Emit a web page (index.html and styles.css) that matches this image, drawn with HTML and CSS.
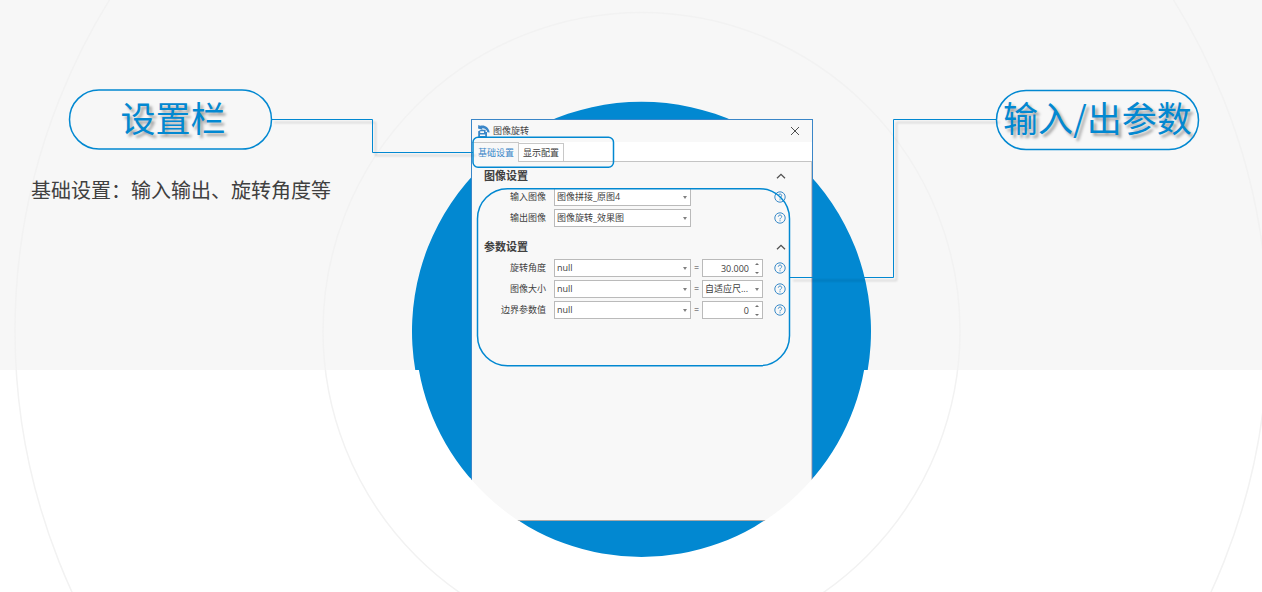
FILE: index.html
```html
<!DOCTYPE html>
<html lang="zh-CN">
<head>
<meta charset="utf-8">
<title>图像旋转</title>
<link rel="stylesheet" href="styles.css">
</head>
<body>
<main class="stage">
  <svg class="canvas" width="1262" height="592" viewBox="0 0 1262 592" aria-hidden="true">
    <path class="disc" d="M415.300 370H418.900A226 226 0 0 0 864.100 370H867.700A229.500 229.500 0 1 0 415.300 370Z"/>
    <g class="rings">
      <circle cx="641.500" cy="331" r="318.500"/>
      <circle cx="641.500" cy="331" r="626.500"/>
    </g>
  </svg>

  <section class="callout callout-left">
    <h2 class="pill">设置栏</h2>
    <p class="note">基础设置：输入输出、旋转角度等</p>
  </section>

  <section class="dialog" aria-label="图像旋转">
    <header class="titlebar">
      <svg class="app-icon" width="13" height="13" viewBox="0 0 13 13" aria-hidden="true">
        <path d="M1.300 0 3.200 0.800C7.500 -0.200 12 2 12.600 7.600L10.400 7.300C9.700 4.600 8 3.200 5 3.300L5.600 4.700 1 3.600Z"/>
        <path fill-rule="evenodd" d="M1.200 6.200 4 4.800H8.600V7H10V12.700H1.200ZM3.200 6.300V7.900H7V6.300ZM3 9.600V11H8.200V9.600Z"/>
      </svg>
      <span class="title">图像旋转</span>
      <button class="close" type="button" aria-label="关闭">
        <svg width="10" height="10" viewBox="0 0 10 10"><path d="M1 1 9 9M9 1 1 9"/></svg>
      </button>
    </header>
    <div class="tabs" role="tablist">
      <button class="tab tab-active" type="button" role="tab" aria-selected="true">基础设置</button>
      <button class="tab" type="button" role="tab" aria-selected="false">显示配置</button>
    </div>
    <form class="body">
      <div class="group">
        <div class="group-head">
          <h3>图像设置</h3>
          <button class="fold" type="button" aria-label="折叠图像设置"><svg width="10" height="6" viewBox="0 0 10 6"><path d="M1 5.300 5 1.300 9 5.300"/></svg></button>
        </div>
        <div class="row">
          <label for="src">输入图像</label>
          <span class="field"><select id="src"><option>图像拼接_原图4</option></select><i class="down"></i></span>
          <button class="help" type="button" aria-label="帮助"><svg width="12" height="12" viewBox="0 0 12 12"><circle cx="6" cy="6" r="5.200"/><path d="M4.300 4.700C4.300 2.500 7.700 2.500 7.700 4.600 7.700 5.900 6 5.900 6 7.400M6 8.300V9.300"/></svg></button>
        </div>
        <div class="row">
          <label for="dst">输出图像</label>
          <span class="field"><select id="dst"><option>图像旋转_效果图</option></select><i class="down"></i></span>
          <button class="help" type="button" aria-label="帮助"><svg width="12" height="12" viewBox="0 0 12 12"><circle cx="6" cy="6" r="5.200"/><path d="M4.300 4.700C4.300 2.500 7.700 2.500 7.700 4.600 7.700 5.900 6 5.900 6 7.400M6 8.300V9.300"/></svg></button>
        </div>
      </div>
      <div class="group">
        <div class="group-head">
          <h3>参数设置</h3>
          <button class="fold" type="button" aria-label="折叠参数设置"><svg width="10" height="6" viewBox="0 0 10 6"><path d="M1 5.300 5 1.300 9 5.300"/></svg></button>
        </div>
        <div class="row">
          <label for="angle">旋转角度</label>
          <span class="field"><select id="angle"><option>null</option></select><i class="down"></i></span>
          <span class="equals">=</span>
          <span class="field"><input class="number" type="text" value="30.000" aria-label="旋转角度值"><i class="spin-up"></i><i class="spin-down"></i></span>
          <button class="help" type="button" aria-label="帮助"><svg width="12" height="12" viewBox="0 0 12 12"><circle cx="6" cy="6" r="5.200"/><path d="M4.300 4.700C4.300 2.500 7.700 2.500 7.700 4.600 7.700 5.900 6 5.900 6 7.400M6 8.300V9.300"/></svg></button>
        </div>
        <div class="row">
          <label for="size">图像大小</label>
          <span class="field"><select id="size"><option>null</option></select><i class="down"></i></span>
          <span class="equals">=</span>
          <span class="field"><select aria-label="图像大小值"><option>自适应尺...</option></select><i class="down"></i></span>
          <button class="help" type="button" aria-label="帮助"><svg width="12" height="12" viewBox="0 0 12 12"><circle cx="6" cy="6" r="5.200"/><path d="M4.300 4.700C4.300 2.500 7.700 2.500 7.700 4.600 7.700 5.900 6 5.900 6 7.400M6 8.300V9.300"/></svg></button>
        </div>
        <div class="row">
          <label for="edge">边界参数值</label>
          <span class="field"><select id="edge"><option>null</option></select><i class="down"></i></span>
          <span class="equals">=</span>
          <span class="field"><input class="number" type="text" value="0" aria-label="边界参数"><i class="spin-up"></i><i class="spin-down"></i></span>
          <button class="help" type="button" aria-label="帮助"><svg width="12" height="12" viewBox="0 0 12 12"><circle cx="6" cy="6" r="5.200"/><path d="M4.300 4.700C4.300 2.500 7.700 2.500 7.700 4.600 7.700 5.900 6 5.900 6 7.400M6 8.300V9.300"/></svg></button>
        </div>
      </div>
    </form>
  </section>

  <section class="callout callout-right">
    <h2 class="pill">输入/出参数</h2>
  </section>

  <svg class="canvas" width="1262" height="592" viewBox="0 0 1262 592" aria-hidden="true">
    <path class="corner" d="M470 478A226 226 0 0 0 520 521.700H470Z"/>
    <path class="corner" d="M813 478A226 226 0 0 1 763 521.700H813Z"/>
    <g class="links">
      <path d="M271 119.500H372.500V152.500H473"/>
      <path d="M997 119.500H893.500V277.500H790"/>
    </g>
    <g class="outlines">
      <rect x="69.500" y="90" width="202" height="59" rx="29.500"/>
      <rect x="996.500" y="90.500" width="202" height="59" rx="29.500"/>
      <rect x="473" y="137.300" width="140.500" height="30" rx="5"/>
      <rect x="477.500" y="188.700" width="312" height="177" rx="30"/>
    </g>
  </svg>
</main>
</body>
</html>
```
FILE: styles.css
```css
* {
  box-sizing: border-box;
}

body {
  margin: 0;
  font-family: "Open Sans", "Noto Sans CJK SC", sans-serif;
  color: #404040;
}

h2,
h3,
p {
  margin: 0;
  font-weight: 400;
}

button {
  padding: 0;
  border: 0;
  background: none;
  font: inherit;
  color: inherit;
}

.stage {
  position: relative;
  display: grid;
  grid-template-columns: 1fr 342px 1fr;
  align-items: start;
  min-height: 100vh;
  padding-left: 22px;
  overflow: hidden;
  background: linear-gradient(#f7f7f7 370px, #ffffff 370px);
}

.canvas {
  position: absolute;
  top: 0;
  left: calc(50% - 631px);
  pointer-events: none;
}

.disc {
  fill: #0288d1;
}

.rings {
  fill: none;
  stroke: #f2f2f2;
  stroke-width: 1.5;
}

.corner {
  fill: #ffffff;
}

.links {
  fill: none;
  stroke: #0288d1;
  filter: drop-shadow(3px 3px 1px rgba(0, 0, 0, 0.2));
}

.outlines {
  fill: none;
  stroke: #0288d1;
  stroke-width: 1.5;
}

.callout {
  position: relative;
  display: flex;
  flex-direction: column;
  gap: 28px;
  padding-top: 88px;
}

.callout-left {
  align-items: flex-end;
  padding-right: 140px;
}

.callout-right {
  padding-left: 184px;
}

.pill {
  width: 202px;
  padding-left: 6px;
  font-family: "Noto Sans CJK SC", sans-serif;
  font-size: 35px;
  line-height: 58px;
  color: #0288d1;
  white-space: nowrap;
  text-shadow: 3px 3px 3px rgba(0, 0, 0, 0.35);
}

.callout-left .pill {
  margin-right: 60px;
  text-align: center;
}

.note {
  font-family: "Noto Sans CJK SC", sans-serif;
  font-size: 20px;
  line-height: 32px;
  white-space: nowrap;
}

.dialog {
  position: relative;
  display: flex;
  flex-direction: column;
  min-height: 402px;
  margin-top: 119px;
  border: 1px solid #3a86c8;
  border-bottom-color: #a8a8a8;
  background: #f8f8f8;
  font-size: 9px;
  line-height: 12px;
}

.titlebar {
  display: flex;
  align-items: center;
  gap: 3px;
  height: 22px;
  padding: 0 12px 0 5px;
}

.app-icon {
  fill: #3a86c8;
}

.title {
  flex: 1;
}

.close,
.fold,
.help {
  display: flex;
}

.close svg,
.fold svg {
  fill: none;
  stroke: #505050;
}

.fold svg {
  stroke-width: 1.3;
}

.tabs {
  display: flex;
  align-items: flex-end;
  height: 20px;
  background: #ffffff;
  border-bottom: 1px solid #c4c4c4;
}

.tab {
  height: 18px;
  padding: 0 4px;
  border: 1px solid #c8c8c8;
  border-width: 1px 1px 0 0;
}

.tab-active {
  height: 20px;
  margin-bottom: -1px;
  padding: 0 4px 0 6px;
  background: #f8f8f8;
  color: #3a86c8;
}

.body {
  display: flex;
  flex: 1;
  flex-direction: column;
  gap: 10px;
  padding: 4px 25px 0 12px;
  border-right: 1px solid #c8c8c8;
}

.group {
  display: flex;
  flex-direction: column;
  gap: 3px;
}

.group-head {
  display: flex;
  align-items: center;
  justify-content: space-between;
  height: 19px;
}

.group-head h3 {
  font-size: 11px;
  font-weight: 700;
  line-height: 16px;
}

.row {
  display: grid;
  grid-template-columns: 70px 137px 11px 61px 1fr;
  align-items: center;
  height: 18px;
}

.row label {
  padding-right: 8px;
  text-align: right;
}

.field {
  position: relative;
  display: flex;
  height: 18px;
}

.field select,
.field input {
  width: 100%;
  height: 18px;
  margin: 0;
  padding: 0 14px 0 2px;
  border: 1px solid #bababa;
  border-radius: 0;
  outline: 0;
  appearance: none;
  background: #ffffff;
  font: inherit;
  color: inherit;
}

.field .number {
  padding-right: 13px;
  text-align: right;
}

.down,
.spin-up,
.spin-down {
  position: absolute;
  right: 4px;
  border: 2px solid transparent;
}

.down {
  top: 8px;
  border-top: 3px solid #808080;
  border-bottom: 0;
}

.spin-up {
  top: 4px;
  border-top: 0;
  border-bottom: 2px solid #707070;
}

.spin-down {
  bottom: 3px;
  border-top: 2px solid #707070;
  border-bottom: 0;
}

.equals {
  text-align: center;
}

.help {
  grid-column: 5;
  justify-self: end;
}

.help svg {
  fill: none;
  stroke: #3a8ac8;
}
```
